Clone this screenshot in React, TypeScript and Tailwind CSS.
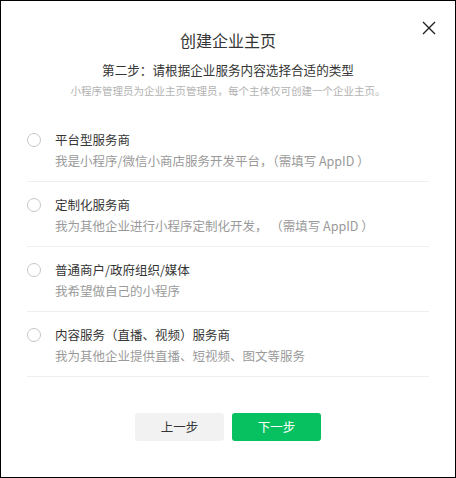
const options = [
  { title: "平台型服务商", desc: "我是小程序/微信小商店服务开发平台，（需填写 AppID ）" },
  { title: "定制化服务商", desc: "我为其他企业进行小程序定制化开发， （需填写 AppID ）" },
  { title: "普通商户/政府组织/媒体", desc: "我希望做自己的小程序" },
  { title: "内容服务（直播、视频）服务商", desc: "我为其他企业提供直播、短视频、图文等服务" },
];

export default function App() {
  return (
    <div
      className="relative h-[478px] w-[456px] border border-black bg-white"
      style={{ fontFamily: '"Noto Sans CJK SC", "Noto Sans", sans-serif' }}
    >
      {/* Close */}
      <button type="button" aria-label="关闭" className="absolute right-[19px] top-[20px] h-[14px] w-[14px]">
        <svg viewBox="0 0 14 14" className="h-[14px] w-[14px]" fill="none" stroke="#222" strokeWidth="1.4">
          <path d="M1 1L13 13M13 1L1 13" />
        </svg>
      </button>

      {/* Header */}
      <div className="flex flex-col items-center pt-[27px]">
        <h1 className="text-[16px] leading-[24px] text-[#353535]">创建企业主页</h1>
        <p className="mt-2 text-[12.6px] leading-[20px] text-[#353535]">第二步：请根据企业服务内容选择合适的类型</p>
        <p className="mt-[3px] text-[10.5px] leading-[16px] text-[#b2b2b2]">
          小程序管理员为企业主页管理员，每个主体仅可创建一个企业主页。
        </p>
      </div>

      {/* Options */}
      <div className="mx-[26px] mt-[18px]">
        {options.map((o) => (
          <label key={o.title} className="flex cursor-pointer border-b border-[#eeeeee] pb-[10px] pt-[13px]">
            <span className="mt-[3px] h-[14px] w-[14px] shrink-0 rounded-full border border-[#c7c7c7]" />
            <div className="ml-[14px]">
              <div className="text-[12.5px] leading-[20px] text-[#353535]">{o.title}</div>
              <div className="mt-px whitespace-pre text-[12.5px] leading-[20px] text-[#9a9a9a]">{o.desc}</div>
            </div>
          </label>
        ))}
      </div>

      {/* Actions */}
      <div className="mt-[36px] flex justify-center gap-2">
        <button type="button" className="h-[28px] w-[89px] rounded-[3px] bg-[#f2f2f2] text-[12.5px] text-[#353535]">
          上一步
        </button>
        <button type="button" className="h-[28px] w-[89px] rounded-[3px] bg-[#07c160] text-[12.5px] text-white">
          下一步
        </button>
      </div>
    </div>
  );
}
